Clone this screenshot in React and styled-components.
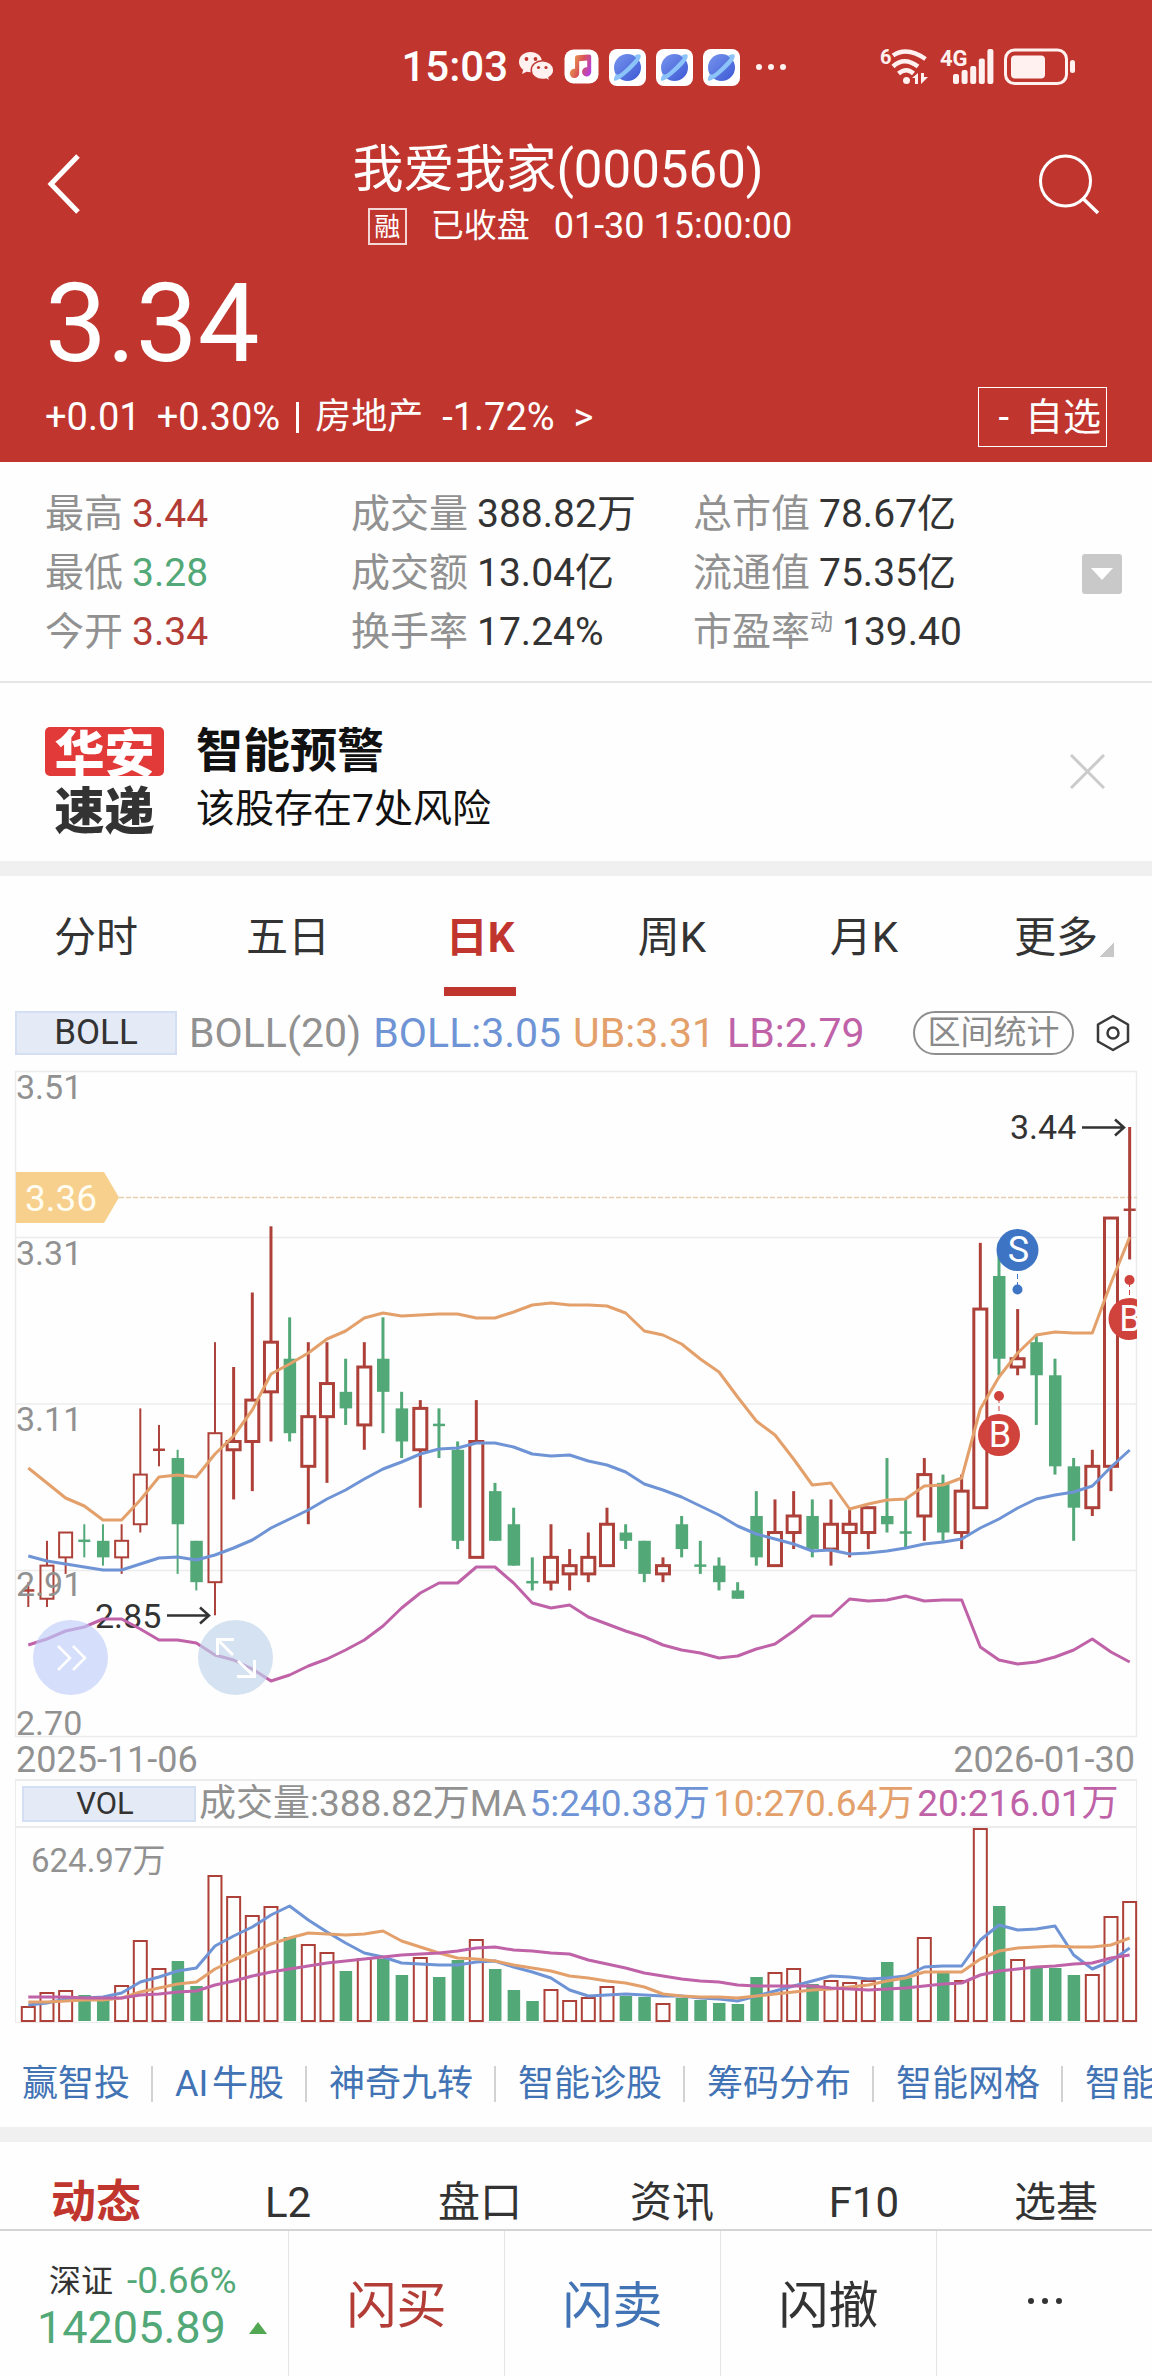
import React from 'react';
import styled, { createGlobalStyle } from 'styled-components';

const C = {
  brand: '#c0362f',
  red: '#b23c36',
  rise: '#ad4038',
  green: '#52a877',
  blue: '#6f94d6',
  orange: '#e3a06b',
  purple: '#bf62a8',
  link: '#4273b4',
  ink: '#333333',
  mute: '#919191',
  line: '#ececec',
  strip: '#f0f0f0',
};

const FONT = 'Roboto, "Noto Sans CJK SC", sans-serif';

const Global = createGlobalStyle`
  *, *::before, *::after { box-sizing: border-box; }
  body { margin: 0; background: #fefefe; color: ${C.ink}; font-family: ${FONT}; }
  button { margin: 0; padding: 0; border: 0; background: none; color: inherit; font: inherit; cursor: pointer; }
  a { color: inherit; text-decoration: none; }
  h1, h2, p, dl, dd { margin: 0; font-weight: 400; }
  svg { display: block; flex: none; }
`;

const Page = styled.main`
  display: flex;
  flex-direction: column;
  width: 100%;
  overflow: hidden;
`;

/* ---------- header ---------- */

const Header = styled.header`
  background: ${C.brand};
  color: #fff;
  padding-bottom: 15px;
`;

const StatusBar = styled.div`
  display: flex;
  justify-content: flex-end;
  align-items: center;
  gap: 94px;
  height: 134px;
  padding-right: 76px;
`;

const StatusGroup = styled.div`
  display: flex;
  align-items: center;
  gap: 10px;
`;

const Clock = styled.time`
  font-size: 42px;
  line-height: 48px;
  font-weight: 500;
`;

const More = styled.span`
  padding-left: 6px;
`;

const TitleBar = styled.div`
  display: grid;
  grid-template-columns: 110px 1fr 110px;
  align-items: center;
  padding-top: 6px;
`;

const IconButton = styled.button`
  display: flex;
  align-items: center;
  justify-content: ${(p) => p.$align || 'center'};
  padding: ${(p) => p.$pad || 0};
`;

const TitleText = styled.div`
  display: flex;
  flex-direction: column;
  align-items: center;
  gap: 3px;
`;

const StockName = styled.h1`
  padding-right: 36px;
  font-size: 51px;
  line-height: 60px;
`;

const SubTitle = styled.p`
  display: flex;
  align-items: center;
  gap: 24px;
  padding-left: 8px;
  font-size: 36px;
  line-height: 46px;
`;

const MarginTag = styled.span`
  border: 2px solid rgba(255, 255, 255, 0.8);
  width: 39px;
  height: 37px;
  font-size: 26px;
  line-height: 34px;
  text-align: center;
`;

const MarketState = styled.span`
  font-size: 33px;
`;

const Price = styled.p`
  margin-top: 19px;
  padding-left: 45px;
  font-size: 110px;
  line-height: 112px;
`;

const ChangeRow = styled.div`
  display: flex;
  align-items: center;
  justify-content: space-between;
  margin-top: 7px;
  padding: 0 45px;
`;

const Changes = styled.p`
  display: flex;
  align-items: center;
  gap: 16px;
  font-size: 38px;
  line-height: 60px;
`;

const Sector = styled.a`
  display: flex;
  align-items: center;
  gap: 19px;
`;

const SectorName = styled.span`
  font-size: 36px;
`;

const Bar = styled.span`
  width: 3px;
  height: 31px;
  background: #fff;
`;

const WatchButton = styled.button`
  display: flex;
  justify-content: flex-end;
  gap: 16px;
  width: 129px;
  height: 60px;
  padding-right: 5px;
  border: 1px solid #fff;
  font-size: 38px;
  line-height: 58px;
`;

/* ---------- quote figures ---------- */

const Stats = styled.section`
  display: flex;
  align-items: center;
  justify-content: space-between;
  padding: 23px 30px 19px 45px;
  border-bottom: 2px solid #e6e6e6;
`;

const StatGrid = styled.dl`
  flex: 1;
  display: grid;
  grid-template-columns: 306fr 342fr 389fr;
  grid-auto-rows: 59px;
`;

const Stat = styled.div`
  display: flex;
  align-items: center;
  gap: 9px;
  white-space: nowrap;
`;

const StatLabel = styled.dt`
  display: flex;
  font-size: 39px;
  line-height: 59px;
  color: ${C.mute};
`;

const Sup = styled.sup`
  font-size: 23px;
  line-height: 40px;
  vertical-align: top;
`;

const StatValue = styled.dd`
  font-size: 39px;
  line-height: 59px;
  color: ${(p) => p.$color || C.ink};
`;

const ExpandButton = styled.button`
  display: flex;
  align-items: center;
  justify-content: center;
  width: 40px;
  height: 40px;
  border-radius: 3px;
  background: #c9c9c9;
`;

/* ---------- alert ---------- */

const Alert = styled.section`
  display: flex;
  align-items: center;
  gap: 32px;
  padding: 38px 47px 22px 45px;
`;

const Logo = styled.div`
  display: flex;
  flex-direction: column;
  gap: 8px;
  width: 119px;
  font-size: 50px;
  line-height: 41px;
  font-weight: 900;
  text-align: center;
`;

const LogoTop = styled.span`
  padding-top: 8px;
  border-radius: 5px;
  background: #e13a39;
  color: #fff;
`;

const LogoBottom = styled.span`
  padding-top: 8px;
  color: ${C.ink};
`;

const AlertText = styled.div`
  flex: 1;
  color: #111;
  line-height: 59px;
`;

const AlertTitle = styled.h2`
  font-size: 47px;
  font-weight: 700;
`;

const AlertBody = styled.p`
  font-size: 39px;
`;

const Strip = styled.div`
  height: 15px;
  background: ${C.strip};
`;

/* ---------- tabs ---------- */

const PeriodTabs = styled.nav`
  display: grid;
  grid-template-columns: repeat(6, 1fr);
  padding-top: 12px;
`;

const PeriodTab = styled.button`
  display: flex;
  flex-direction: column;
  align-items: center;
  height: 108px;
  font-size: 42px;
  line-height: 99px;
  font-weight: ${(p) => (p.$active ? 700 : 400)};
  color: ${(p) => (p.$active ? C.brand : C.ink)};

  &::after {
    content: '';
    width: 72px;
    height: 9px;
    background: ${(p) => (p.$active ? C.brand : 'transparent')};
  }
`;

const MoreLabel = styled.span`
  display: flex;
  align-items: center;
  gap: 2px;
  padding-left: 16px;
`;

const Corner = styled.i`
  width: 14px;
  height: 14px;
  margin-top: 24px;
  background: linear-gradient(135deg, transparent 50%, #c8c8c8 50%);
`;

/* ---------- indicator rows ---------- */

const IndicatorRow = styled.div`
  display: flex;
  align-items: center;
  gap: 12px;
  height: 64px;
  padding: 10px 22px 0 15px;
  white-space: nowrap;
`;

const IndicatorButton = styled.button`
  width: ${(p) => p.$w}px;
  height: ${(p) => p.$h}px;
  padding-right: ${(p) => p.$inset || 0}px;
  border: 2px solid #d5dff4;
  background: #e4eaf6;
  color: ${C.ink};
  font-size: ${(p) => p.$size}px;
  line-height: ${(p) => p.$h - 4}px;
`;

const Reading = styled.span`
  font-size: ${(p) => p.$size}px;
  line-height: 44px;
  color: ${(p) => p.$color || C.mute};
`;

const RangeButton = styled.button`
  margin-left: auto;
  margin-right: 10px;
  width: 161px;
  height: 44px;
  border: 2px solid #8e8e8e;
  border-radius: 22px;
  font-size: 33px;
  line-height: 40px;
  color: #8a8a8a;
`;

/* ---------- charts ---------- */

const ChartArea = styled.div`
  position: relative;
`;

const Plot = styled.svg`
  width: 100%;
  height: auto;
  font-family: ${FONT};
`;

const RoundButton = styled.button`
  position: absolute;
  left: ${(p) => p.$left};
  bottom: 43px;
  display: flex;
  align-items: center;
  justify-content: center;
  width: 75px;
  height: 75px;
  border-radius: 50%;
  background: ${(p) => p.$bg};
`;

const Dates = styled.div`
  display: flex;
  justify-content: space-between;
  padding: 4px 17px 0 16px;
  font-size: 36px;
  line-height: 37px;
  color: ${C.mute};
`;

const VolumeRow = styled.div`
  display: flex;
  align-items: center;
  gap: 3px;
  height: 49px;
  margin: 0 15px;
  padding-left: 6px;
  border: solid ${C.line};
  border-width: 2px 1px;
  white-space: nowrap;
`;

/* ---------- links and footer ---------- */

const Links = styled.nav`
  display: flex;
  align-items: center;
  height: 103px;
  padding-top: 16px;
  white-space: nowrap;
  overflow: hidden;
`;

const ToolLink = styled.a`
  flex: none;
  padding: 0 21px 0 22px;
  font-size: 36px;
  line-height: 36px;
  color: ${C.link};

  & + & {
    border-left: 2px solid #d2d2d2;
  }
`;

const InfoTabs = styled.nav`
  display: grid;
  grid-template-columns: repeat(6, 1fr);
  padding-top: 35px;
  border-bottom: 2px solid #d4d4d4;
`;

const InfoTab = styled.button`
  font-size: ${(p) => (p.$active ? 45 : 42)}px;
  line-height: 52px;
  font-weight: ${(p) => (p.$active ? 700 : 400)};
  color: ${(p) => (p.$active ? C.brand : C.ink)};
`;

const Footer = styled.footer`
  display: grid;
  grid-template-columns: 4fr 3fr 3fr 3fr 3fr;
  height: 145px;
`;

const IndexCell = styled.a`
  display: flex;
  flex-direction: column;
  padding: 27px 0 0 37px;
  color: ${C.green};
`;

const IndexTop = styled.span`
  display: flex;
  align-items: center;
  gap: 14px;
  padding-left: 12px;
  font-size: 37px;
  line-height: 46px;
`;

const IndexName = styled.span`
  font-size: 32px;
  color: ${C.ink};
`;

const IndexValue = styled.span`
  display: flex;
  align-items: center;
  gap: 23px;
  font-size: 45px;
  line-height: 47px;
`;

const Action = styled.button`
  padding-bottom: 5px;
  border-left: 1px solid #e4e4e4;
  font-size: 50px;
  color: ${(p) => p.$color || C.ink};
`;

const Centered = styled.span`
  display: flex;
  justify-content: center;
`;

/* ---------- data ---------- */

// [direction, high, body top, body bottom, low] in cents
const CANDLES = [
  ['r', 289, 288, 288, 286], ['r', 294, 291, 287, 286], ['r', 295, 295, 292, 290], ['g', 296, 294, 294, 292],
  ['g', 296, 294, 292, 291], ['r', 296, 294, 292, 290], ['r', 310, 302, 296, 295], ['r', 308, 305, 305, 303],
  ['g', 305, 304, 296, 290], ['g', 294, 294, 289, 288], ['r', 318, 307, 289, 285], ['r', 315, 306, 305, 299],
  ['r', 324, 311, 306, 300], ['r', 332, 318, 312, 306], ['g', 321, 316, 307, 306], ['r', 318, 309, 303, 296],
  ['r', 318, 313, 309, 301], ['g', 316, 312, 310, 308], ['r', 318, 315, 308, 305], ['g', 321, 316, 312, 307],
  ['g', 312, 310, 306, 304], ['r', 311, 310, 305, 298], ['g', 310, 308, 308, 304], ['g', 306, 305, 294, 293],
  ['r', 311, 306, 292, 292], ['g', 301, 300, 294, 294], ['g', 298, 296, 291, 291], ['g', 292, 289, 289, 288],
  ['r', 296, 292, 289, 288], ['r', 293, 291, 290, 288], ['r', 295, 292, 290, 289], ['r', 298, 296, 291, 291],
  ['g', 296, 295, 294, 293], ['g', 294, 294, 290, 289], ['r', 292, 291, 290, 289], ['g', 297, 296, 293, 292],
  ['g', 294, 291, 291, 290], ['g', 292, 291, 289, 288], ['g', 289, 288, 287, 287], ['g', 300, 297, 292, 291],
  ['r', 299, 295, 291, 291], ['r', 300, 297, 295, 293], ['g', 299, 297, 293, 292], ['r', 299, 296, 293, 291],
  ['r', 298, 296, 295, 292], ['r', 298, 298, 295, 293], ['g', 304, 297, 296, 295], ['g', 299, 295, 295, 293],
  ['r', 304, 302, 297, 294], ['g', 302, 301, 295, 294], ['r', 302, 300, 295, 293], ['r', 330, 322, 298, 298],
  ['g', 330, 326, 316, 314], ['r', 322, 316, 315, 314], ['g', 319, 318, 314, 308], ['g', 316, 314, 303, 302],
  ['g', 304, 303, 298, 294], ['r', 305, 303, 298, 297], ['r', 333, 333, 303, 300], ['r', 344, 334, 334, 328],
];

const UPPER = [408, 423, 438, 446, 460, 460, 440, 417, 415, 417, 394, 376, 350, 314, 304, 293, 279, 271, 258, 253, 256, 255, 254, 254, 258, 258, 252, 245, 243, 245, 245, 246, 253, 271, 275, 284, 299, 312, 337, 361, 375, 399, 425, 423, 449, 444, 440, 439, 426, 425, 418, 349, 317, 293, 275, 272, 273, 273, 223, 177];
const MIDDLE = [496, 501, 504, 507, 510, 510, 504, 498, 497, 500, 495, 488, 480, 468, 459, 450, 439, 430, 419, 409, 402, 394, 389, 388, 383, 383, 387, 394, 396, 395, 401, 405, 412, 424, 430, 437, 446, 455, 466, 474, 479, 484, 491, 490, 494, 493, 491, 488, 484, 482, 479, 468, 459, 448, 439, 435, 432, 426, 407, 390];
const LOWER = [585, 579, 571, 567, 559, 559, 569, 580, 580, 583, 595, 600, 609, 621, 615, 606, 599, 590, 580, 566, 548, 533, 523, 523, 507, 507, 523, 543, 548, 545, 557, 564, 571, 577, 585, 590, 593, 598, 596, 589, 584, 571, 556, 556, 539, 541, 540, 536, 541, 540, 540, 587, 600, 604, 602, 597, 590, 579, 592, 602];

const VOLUMES = [16, 30, 32, 27, 22, 37, 82, 54, 61, 36, 147, 126, 107, 116, 85, 78, 70, 51, 64, 63, 47, 65, 45, 62, 83, 53, 32, 21, 33, 22, 25, 36, 26, 25, 19, 24, 22, 19, 18, 45, 50, 54, 38, 42, 40, 42, 60, 44, 85, 49, 42, 194, 116, 63, 54, 54, 47, 48, 106, 121];
const MA5 = [17, 19, 23, 24, 25, 29, 40, 45, 51, 54, 76, 86, 95, 107, 116, 102, 90, 79, 69, 65, 59, 58, 57, 57, 60, 61, 55, 50, 44, 32, 26, 27, 28, 27, 26, 26, 24, 23, 21, 26, 31, 36, 41, 46, 45, 43, 44, 46, 55, 56, 56, 82, 97, 92, 93, 96, 67, 53, 61, 74];
const MA10 = [20, 20, 21, 22, 22, 24, 30, 34, 38, 40, 53, 62, 70, 78, 84, 89, 88, 87, 88, 91, 81, 75, 69, 64, 63, 61, 57, 54, 51, 46, 44, 41, 39, 35, 28, 26, 25, 25, 24, 26, 28, 30, 32, 33, 35, 37, 41, 44, 50, 50, 50, 63, 71, 74, 75, 76, 75, 75, 77, 84];
const MA20 = [25, 25, 25, 24, 24, 24, 27, 28, 30, 31, 37, 41, 46, 50, 53, 56, 59, 61, 63, 65, 67, 68, 69, 71, 74, 75, 72, 71, 69, 68, 62, 58, 54, 49, 46, 43, 41, 40, 37, 36, 36, 36, 36, 34, 33, 32, 33, 34, 36, 38, 39, 47, 51, 53, 55, 56, 58, 59, 64, 67];

const STEP = 18.667;
const xAt = (i) => 28.3 + i * STEP;
const yAt = (cents) => 67 + (344 - cents) * 8.276;
const VOL_BASE = 194;
const points = (list, y) => list.map((v, i) => `${xAt(i).toFixed(1)},${y(v)}`).join(' ');

/* ---------- icons ---------- */

const WechatIcon = () => (
  <svg width="36" height="34" viewBox="0 0 36 34" aria-hidden="true">
    <path d="M12.5 2C6 2 1 6.300 1 12c0 3.200 1.600 5.900 4.200 7.700L4 24l4.600-2.300c1.200.300 2.500.500 3.900.500C19 22.200 24 17.800 24 12S19 2 12.500 2Z" fill="#fff1ef" />
    <circle cx="8.500" cy="9" r="1.900" fill={C.brand} />
    <circle cx="17.500" cy="9" r="1.900" fill={C.brand} />
    <path d="M24.500 10.800c-6.300 0-11.300 4.100-11.300 9.400s5 9.400 11.300 9.400c1.300 0 2.500-.2 3.600-.5l4 2.200-1.100-3.700c2.900-1.700 4.800-4.400 4.800-7.400 0-5.300-5-9.400-11.300-9.400Z" fill="#fff1ef" stroke={C.brand} strokeWidth="1.500" />
    <circle cx="20.500" cy="17.500" r="1.600" fill={C.brand} />
    <circle cx="28" cy="17.500" r="1.600" fill={C.brand} />
  </svg>
);

const MusicIcon = () => (
  <svg width="35" height="36" viewBox="0 0 35 36" aria-hidden="true">
    <defs>
      <linearGradient id="note" x1="0" y1="0.300" x2="1" y2="0.700">
        <stop offset="0" stopColor="#eba44a" />
        <stop offset="0.500" stopColor="#d95457" />
        <stop offset="1" stopColor="#b33fe0" />
      </linearGradient>
    </defs>
    <rect x="0.500" y="0.500" width="34" height="34" rx="9" fill="#fff" />
    <path d="M11 9c0-1.700.8-2.500 2.200-2.700l11.500-.8c1.600-.1 2.500.8 2.500 2.200V23a4.600 4.600 0 1 1-4-4.700V11.500l-8 .7V24.500a4.700 4.700 0 1 1-4.200-4.800Z" fill="url(#note)" />
  </svg>
);

const PlanetIcon = ({ id }) => (
  <svg width="37" height="37" viewBox="0 0 37 37" aria-hidden="true">
    <defs>
      <linearGradient id={id} x1="0" y1="0" x2="1" y2="1">
        <stop offset="0" stopColor="#7795ee" />
        <stop offset="1" stopColor="#3c58d4" />
      </linearGradient>
    </defs>
    <rect width="37" height="37" rx="8" fill="#fff" />
    <circle cx="18.500" cy="18.500" r="13.500" fill={`url(#${id})`} />
    <path d="M25 7c3-2 6-2.500 6.600-1C33 10 26 17 20 22.500S7 33 5.200 31.500C4.500 30.500 5 28 7 25c1 .5 1.500.8 2.500.5C17 21 23 13 27 9Z" fill="#8cc4fa" />
  </svg>
);

const WifiIcon = () => (
  <svg width="50" height="40" viewBox="0 0 50 40" fill="none" stroke="#fff1ef" aria-hidden="true">
    <text x="0" y="17" fontSize="20" fontWeight="700" fontFamily={FONT} fill="#fff1ef" stroke="none">6</text>
    <path d="M13 8.500q14-9.500 32.500 3.500" strokeWidth="4.500" />
    <path d="M13 19.500q11-10.500 25 0" strokeWidth="4.500" />
    <path d="M18.500 26.500q8-6.500 15 0" strokeWidth="4.500" />
    <circle cx="26.500" cy="33.500" r="3.500" fill="#fff1ef" stroke="none" />
    <path d="M32 31l6-5v11h-3v-6zM41 26h3v4h4l-7 7z" fill="#fff1ef" stroke="none" />
  </svg>
);

const SignalIcon = () => (
  <svg width="54" height="40" viewBox="0 0 54 40" fill="#fff1ef" aria-hidden="true">
    <text x="0" y="19" fontSize="22" fontWeight="700" fontFamily={FONT}>4G</text>
    {[27, 23, 19, 11.5, 2].map((top, i) => (
      <rect key={top} x={13 + i * 8.600} y={top} width="6" height={37 - top} rx="2" />
    ))}
  </svg>
);

const BatteryIcon = () => (
  <svg width="72" height="38" viewBox="0 0 72 38" aria-hidden="true">
    <rect x="1.500" y="2" width="61" height="33.500" rx="9" fill="none" stroke="#fff1ef" strokeWidth="3" />
    <rect x="7" y="7.500" width="34" height="23" rx="4" fill="#fff1ef" />
    <rect x="66" y="12" width="5" height="13" rx="2.500" fill="#fff1ef" />
  </svg>
);

const Ellipsis = ({ w, r, color }) => (
  <svg width={w} height="10" viewBox={`0 0 ${w} 10`} fill={color} aria-hidden="true">
    <circle cx={r} cy="5" r={r} />
    <circle cx={w / 2} cy="5" r={r} />
    <circle cx={w - r} cy="5" r={r} />
  </svg>
);

/* ---------- chart parts ---------- */

function Candle({ i, data }) {
  const [dir, high, top, bottom, low] = data;
  const x = xAt(i);
  const color = dir === 'r' ? C.rise : C.green;
  const yt = yAt(top);
  const yb = yAt(bottom);
  const thick = i < 11 ? 2 : 3;
  return (
    <g stroke={color} strokeWidth={thick} fill="none">
      <line x1={x} x2={x} y1={yAt(high)} y2={dir === 'g' || top === bottom ? yAt(low) : yt} />
      {top === bottom && <line x1={x - 6} x2={x + 6} y1={yt} y2={yt} strokeWidth="2.500" />}
      {top !== bottom && dir === 'g' && <rect x={x - 6} y={yt} width="12.500" height={yb - yt} fill={color} stroke="none" />}
      {top !== bottom && dir === 'r' && (
        <>
          <rect x={x - 6.5} y={yt} width="13" height={yb - yt} />
          <line x1={x} x2={x} y1={yb} y2={yAt(low)} />
        </>
      )}
    </g>
  );
}

function Marker({ x, y, dotY, color, letter }) {
  return (
    <g>
      <line x1={x} x2={x} y1={y} y2={dotY} stroke={color} strokeWidth="1" strokeDasharray="5 3" />
      <circle cx={x} cy={dotY} r="5" fill={color} />
      <circle cx={x} cy={y} r="21" fill={color} />
      <text x={x + 1} y={y + 12} fontSize="36" fill="#fff" textAnchor="middle">{letter}</text>
    </g>
  );
}

function PriceChart() {
  return (
    <Plot viewBox="0 0 1152 678" role="img" aria-label="日K">
      <defs>
        <clipPath id="plot"><rect x="15" y="0" width="1122" height="678" /></clipPath>
      </defs>
      <g stroke={C.line} fill="none">
        <rect x="15.500" y="11.500" width="1121" height="665" strokeWidth="1.500" />
        {[177.5, 344, 510.5].map((y) => <line key={y} x1="16" x2="1136" y1={y} y2={y} strokeWidth="1.500" />)}
      </g>
      <g clipPath="url(#plot)">
        <line x1="119" x2="1137" y1="137.500" y2="137.500" stroke="#e6cfae" strokeWidth="1.500" strokeDasharray="5 2" />
        {CANDLES.map((d, i) => <Candle key={i} i={i} data={d} />)}
        <g fontSize="34" fill={C.mute}>
          <text x="16" y="39">3.51</text>
          <text x="16" y="205">3.31</text>
          <text x="16" y="371">3.11</text>
          <text x="16" y="536">2.91</text>
          <text x="16" y="675">2.70</text>
        </g>
        <g fontSize="34" fill={C.ink}>
          <text x="95" y="568">2.85</text>
          <text x="1010" y="79">3.44</text>
        </g>
        <g stroke={C.ink} strokeWidth="2.500" fill="none">
          <path d="M167 555.500H209M200 547.500l9 8-9 8" />
          <path d="M1082 67.500h42M1115 59.500l9 8-9 8" />
        </g>
        <Marker x={999} y={375} dotY={336} color="#cf433c" letter="B" />
        <g fill="none" strokeWidth="3" strokeLinejoin="round">
          <polyline points={points(LOWER, (v) => v)} stroke={C.purple} />
          <polyline points={points(MIDDLE, (v) => v)} stroke={C.blue} />
          <polyline points={points(UPPER, (v) => v)} stroke={C.orange} />
        </g>
        <Marker x={1017.5} y={190} dotY={229.5} color="#3d74c4" letter="S" />
        <Marker x={1129.5} y={259} dotY={220} color="#cf433c" letter="B" />
      </g>
      <path d="M16 112H104L119 137.500L104 163H16Z" fill="#f6d08c" />
      <text x="25" y="151" fontSize="37" fill="#fffdf2">3.36</text>
    </Plot>
  );
}

function VolumeChart() {
  const y = (v) => VOL_BASE - v;
  return (
    <Plot viewBox="0 0 1152 196" role="img" aria-label="成交量">
      <path d="M15.500 0V194.500H1136.500V0" fill="none" stroke={C.line} />
      <text x="31" y="44" fontSize="33" fill={C.mute}>624.97万</text>
      {VOLUMES.map((v, i) => {
        const red = CANDLES[i][0] === 'r';
        return red ? (
          <rect key={i} x={xAt(i) - 6.5} y={y(v) + 1} width="13" height={v - 2} fill="none" stroke={C.rise} strokeWidth="2" />
        ) : (
          <rect key={i} x={xAt(i) - 6} y={y(v)} width="12.500" height={v - 1} fill={C.green} />
        );
      })}
      <g fill="none" strokeWidth="3" strokeLinejoin="round">
        <polyline points={points(MA5, y)} stroke={C.blue} />
        <polyline points={points(MA10, y)} stroke={C.orange} />
        <polyline points={points(MA20, y)} stroke={C.purple} />
      </g>
    </Plot>
  );
}

/* ---------- page ---------- */

const STATS = [
  ['最高', '3.44', C.red], ['成交量', '388.82万'], ['总市值', '78.67亿'],
  ['最低', '3.28', C.green], ['成交额', '13.04亿'], ['流通值', '75.35亿'],
  ['今开', '3.34', C.red], ['换手率', '17.24%'], ['市盈率', '139.40', null, '动'],
];
const PERIODS = ['分时', '五日', '日K', '周K', '月K', '更多'];
const TOOLS = ['赢智投', 'AI\u200a牛股', '神奇九转', '智能诊股', '筹码分布', '智能网格', '智能条件'];
const INFO = ['动态', 'L2', '盘口', '资讯', 'F10', '选基'];

export default function App() {
  return (
    <Page>
      <Global />
      <Header>
        <StatusBar>
          <StatusGroup>
            <Clock>15:03</Clock>
            <WechatIcon />
            <MusicIcon />
            <PlanetIcon id="p1" />
            <PlanetIcon id="p2" />
            <PlanetIcon id="p3" />
            <More><Ellipsis w={30} r={3} color="#fff1ef" /></More>
          </StatusGroup>
          <StatusGroup>
            <WifiIcon />
            <SignalIcon />
            <BatteryIcon />
          </StatusGroup>
        </StatusBar>
        <TitleBar>
          <IconButton $align="flex-start" $pad="0 0 22px 46px" aria-label="返回">
            <svg width="36" height="60" viewBox="0 0 36 60" fill="none" stroke="#fff" strokeWidth="5">
              <path d="M32 2L5 30L32 58" />
            </svg>
          </IconButton>
          <TitleText>
            <StockName>我爱我家(000560)</StockName>
            <SubTitle>
              <MarginTag>融</MarginTag>
              <MarketState>已收盘</MarketState>
              <time>01-30 15:00:00</time>
            </SubTitle>
          </TitleText>
          <IconButton $align="flex-end" $pad="0 52px 22px 0" aria-label="搜索">
            <svg width="62" height="62" viewBox="0 0 62 62" fill="none" stroke="#fff" strokeWidth="3">
              <circle cx="27.500" cy="28" r="25" />
              <path d="M45 45.500L60 60" strokeWidth="3.500" />
            </svg>
          </IconButton>
        </TitleBar>
        <Price>3.34</Price>
        <ChangeRow>
          <Changes>
            <span>+0.01</span>
            <span>+0.30%</span>
            <Bar />
            <Sector href="#sector">
              <SectorName>房地产</SectorName>
              <span>-1.72%</span>
              <span>&gt;</span>
            </Sector>
          </Changes>
          <WatchButton><span>-</span><span>自选</span></WatchButton>
        </ChangeRow>
      </Header>

      <Stats>
        <StatGrid>
          {STATS.map(([label, value, color, sup]) => (
            <Stat key={label}>
              <StatLabel>{label}{sup && <Sup>{sup}</Sup>}</StatLabel>
              <StatValue $color={color}>{value}</StatValue>
            </Stat>
          ))}
        </StatGrid>
        <ExpandButton aria-label="展开">
          <svg width="22" height="12" viewBox="0 0 22 12"><path d="M0 0H22L11 12Z" fill="#fff" /></svg>
        </ExpandButton>
      </Stats>

      <Alert>
        <Logo>
          <LogoTop>华安</LogoTop>
          <LogoBottom>速递</LogoBottom>
        </Logo>
        <AlertText>
          <AlertTitle>智能预警</AlertTitle>
          <AlertBody>该股存在7处风险</AlertBody>
        </AlertText>
        <IconButton $pad="0 0 18px" aria-label="关闭">
          <svg width="35" height="35" viewBox="0 0 35 35" stroke="#cbcbcb" strokeWidth="3">
            <path d="M1 1L34 34M34 1L1 34" />
          </svg>
        </IconButton>
      </Alert>
      <Strip />

      <PeriodTabs>
        {PERIODS.map((name) => (
          <PeriodTab key={name} $active={name === '日K'}>
            {name === '更多' ? <MoreLabel>{name}<Corner /></MoreLabel> : name}
          </PeriodTab>
        ))}
      </PeriodTabs>

      <IndicatorRow>
        <IndicatorButton $w={162} $h={44} $size={35}>BOLL</IndicatorButton>
        <Reading $size={41}>BOLL(20)</Reading>
        <Reading $size={41} $color={C.blue}>BOLL:3.05</Reading>
        <Reading $size={41} $color={C.orange}>UB:3.31</Reading>
        <Reading $size={41} $color={C.purple}>LB:2.79</Reading>
        <RangeButton>区间统计</RangeButton>
        <IconButton aria-label="设置">
          <svg width="34" height="38" viewBox="0 0 34 38" fill="none" stroke="#3a3a3a" strokeWidth="2.500">
            <path d="M17 2L32 10.500V27.500L17 36L2 27.500V10.500Z" strokeLinejoin="round" />
            <circle cx="17" cy="19" r="5.500" />
          </svg>
        </IconButton>
      </IndicatorRow>

      <ChartArea>
        <PriceChart />
        <RoundButton $left="33px" $bg="rgba(190, 206, 250, 0.65)" aria-label="快进">
          <svg width="32" height="26" viewBox="0 0 32 26" fill="none" stroke="#fff" strokeWidth="2.500">
            <path d="M3 1L15 13L3 25M18 1L30 13L18 25" />
          </svg>
        </RoundButton>
        <RoundButton $left="198px" $bg="rgba(190, 210, 233, 0.65)" aria-label="全屏">
          <svg width="42" height="42" viewBox="0 0 42 42" fill="none" stroke="#fff" strokeWidth="3">
            <path d="M19 2.500H2.500V18M2.500 2.500L18 18M22 39.500H39.500V23M39.500 39.500L23 24" />
          </svg>
        </RoundButton>
      </ChartArea>
      <Dates>
        <time>2025-11-06</time>
        <time>2026-01-30</time>
      </Dates>
      <VolumeRow>
        <IndicatorButton $w={174} $h={36} $size={31} $inset={8}>VOL</IndicatorButton>
        <Reading $size={37}>成交量:388.82万MA</Reading>
        <Reading $size={37} $color={C.blue}>5:240.38万</Reading>
        <Reading $size={37} $color={C.orange}>10:270.64万</Reading>
        <Reading $size={37} $color={C.purple}>20:216.01万</Reading>
      </VolumeRow>
      <VolumeChart />

      <Links>
        {TOOLS.map((name) => <ToolLink key={name} href="#tool">{name}</ToolLink>)}
      </Links>
      <Strip />

      <InfoTabs>
        {INFO.map((name) => <InfoTab key={name} $active={name === '动态'}>{name}</InfoTab>)}
      </InfoTabs>
      <Footer>
        <IndexCell href="#index">
          <IndexTop><IndexName>深证</IndexName>-0.66%</IndexTop>
          <IndexValue>
            14205.89
            <svg width="18" height="12" viewBox="0 0 18 12"><path d="M9 0L18 12H0Z" fill="#52a852" /></svg>
          </IndexValue>
        </IndexCell>
        <Action $color={C.red}>闪买</Action>
        <Action $color={C.link}>闪卖</Action>
        <Action>闪撤</Action>
        <Action aria-label="更多">
          <Centered><Ellipsis w={34} r={3} color={C.ink} /></Centered>
        </Action>
      </Footer>
    </Page>
  );
}
